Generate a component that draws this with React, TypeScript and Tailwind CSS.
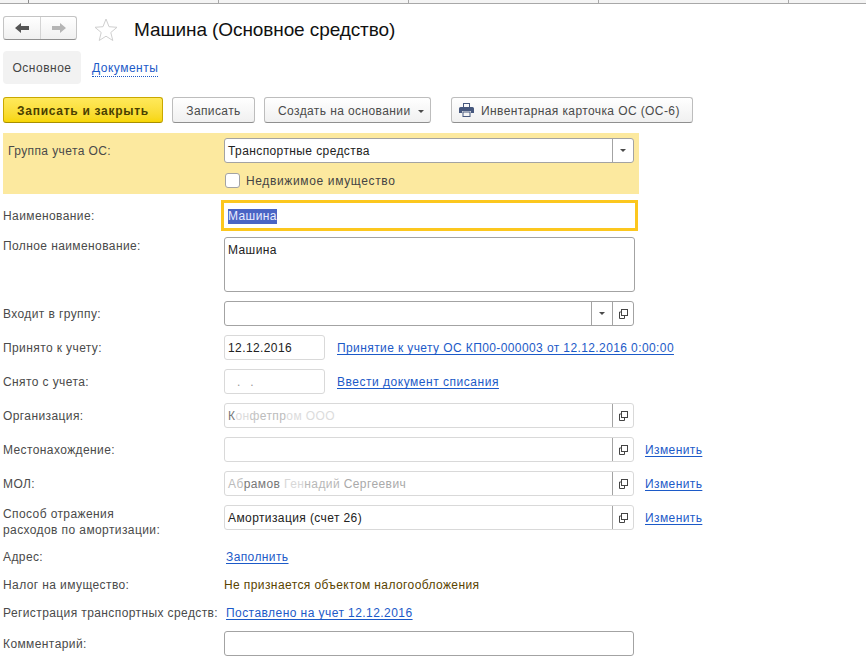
import React from "react";

const Caret = () => (
  <svg width="6" height="3" viewBox="0 0 6 3" className="shrink-0"><path d="M0 0h6L3 3z" fill="#4a4a4a" /></svg>
);

const OpenIcon = () => (
  <svg width="9" height="10" viewBox="0 0 9 10" fill="none" stroke="#444" strokeWidth="1" className="shrink-0">
    <rect x="2.5" y="0.5" width="6" height="6" />
    <path d="M2 3H0.5V9.500H5.500V7" />
  </svg>
);

const FieldButton = ({ kind, border }: { kind: "caret" | "open"; border: string }) => (
  <div className={`w-[21px] self-stretch flex items-center justify-center border-l ${border}`}>
    {kind === "caret" ? <Caret /> : <OpenIcon />}
  </div>
);

const Field = ({
  w,
  dark,
  children,
  buttons = [],
}: {
  w: string;
  dark?: boolean;
  children?: React.ReactNode;
  buttons?: ("caret" | "open")[];
}) => (
  <div className={`${w} h-[25px] flex items-center bg-white rounded-[3px] border ${dark ? "border-[#a3a3a3]" : "border-[#d9d9d9]"} shrink-0`}>
    <div className="flex-1 pl-[3px] pt-[2px] text-[#222] whitespace-nowrap overflow-hidden">{children}</div>
    {buttons.map((b, i) => (
      <FieldButton key={i} kind={b} border="border-[#a3a3a3]" />
    ))}
  </div>
);

const A = ({ children, className = "" }: { children: React.ReactNode; className?: string }) => (
  <a className={`pt-[2px] text-[#1c5ac8] underline underline-offset-2 whitespace-nowrap ${className}`}>{children}</a>
);

const Row = ({
  label,
  children,
  className = "h-[25px] mt-[9px]",
}: {
  label: React.ReactNode;
  children: React.ReactNode;
  className?: string;
}) => (
  <div className={`flex items-center ${className}`}>
    <div className="w-[221px] shrink-0 pt-[2px] text-[#4a4a4a] whitespace-nowrap">{label}</div>
    {children}
  </div>
);

const Btn = ({ children, className = "" }: { children: React.ReactNode; className?: string }) => (
  <button className={`h-[26px] pt-[2px] flex items-center justify-center rounded-[3px] border border-[#bdbdbd] border-b-[#8f8f8f] bg-gradient-to-b from-white to-[#f0f0f0] text-[#4a4a4a] ${className}`}>
    {children}
  </button>
);

export default function App() {
  return (
    <div className="w-[866px] h-[666px] overflow-hidden bg-white text-[12px] leading-[15px] tracking-[0.4px] [font-family:'Liberation_Sans',Arial,sans-serif]">
      <div className="flex h-[4px] bg-[#f4f4f4] border-b border-[#a8a8a8]">
        <div className="w-[29px] border-r border-[#8a8a8a]" />
        <div className="w-[190px] border-r border-[#a8a8a8]" />
        <div className="w-[190px] border-r border-[#a8a8a8]" />
        <div className="w-[190px] border-r border-[#a8a8a8]" />
        <div className="w-[190px] border-r border-[#a8a8a8]" />
      </div>

      <div className="flex items-center h-[24px] mt-[12px] pl-[3px]">
        <div className="flex w-[74px] h-[24px] rounded-[3px] border border-[#c4c4c4] border-b-[#8f8f8f] bg-gradient-to-b from-white to-[#f0f0f0]">
          <div className="w-[37px] flex items-center justify-center border-r border-[#d4d4d4]">
            <svg width="14" height="10" viewBox="0 0 14 10"><path d="M0 5L6 0V3H14V7H6V10z" fill="#555" /></svg>
          </div>
          <div className="flex-1 flex items-center justify-center">
            <svg width="14" height="10" viewBox="0 0 14 10"><path d="M14 5L8 0V3H0V7H8V10z" fill="#b5b5b5" /></svg>
          </div>
        </div>
        <svg width="24" height="23" viewBox="0 0 24 23" className="ml-[17px] mt-[3px]" fill="#fff" stroke="#cfcfcf" strokeWidth="1">
          <path d="M12 1l3 7.700 8 .6-6.200 5.200 2 8-6.800-4.300-6.800 4.300 2-8L1 9.300l8-.6z" />
        </svg>
        <h1 className="ml-[16px] pt-[4px] text-[19px] leading-[24px] tracking-[-0.1px] text-[#111]">Машина (Основное средство)</h1>
      </div>

      <div className="flex items-center h-[33px] mt-[11px] pl-[3px]">
        <div className="w-[78px] h-[33px] pt-[2px] flex items-center justify-center rounded-[4px] bg-[#f2f2f2] text-[#444] tracking-[0.5px]">Основное</div>
        <a className="ml-[11px] mt-[2px] text-[#1c5ac8] border-b border-dotted border-[#1c5ac8] tracking-[0.5px]">Документы</a>
      </div>

      <div className="flex items-center h-[26px] mt-[13px] pl-[3px]">
        <Btn className="w-[160px] !border-[#c9a800] !border-b-[#a88f00] !from-[#ffe95a] !to-[#f7d600] !text-[#4a3f00] font-bold tracking-[0.72px]">Записать и закрыть</Btn>
        <Btn className="w-[83px] ml-[9px]">Записать</Btn>
        <Btn className="w-[167px] ml-[9px] !justify-start pl-[13px] gap-[7px]">Создать на основании <Caret /></Btn>
        <Btn className="w-[242px] ml-[20px] !justify-start pl-[7px] gap-[7px]">
          <svg width="15" height="14" viewBox="0 0 15 14" fill="#47587e" className="-mt-[2px]">
            <path d="M4 0h7v4H4z M5 1v3h5V1z" fillRule="evenodd" />
            <path d="M1.500 4h12A1.500 1.500 0 0 1 15 5.500V10h-3V8H3v2H0V5.500A1.500 1.500 0 0 1 1.500 4z" />
            <path d="M3.500 8.500h8V14h-8z M4.500 9.500V13h6V9.500z" fillRule="evenodd" />
          </svg>
          Инвентарная карточка ОС (ОС-6)
        </Btn>
      </div>

      <div className="w-[636px] h-[61px] mt-[10px] ml-[3px] bg-[#fce99f] pt-[5px]">
        <div className="flex items-center h-[25px]">
          <div className="w-[221px] pl-[5px] pt-[2px] text-[#4a4a4a]">Группа учета ОС:</div>
          <Field w="w-[410px]" dark buttons={["caret"]}>Транспортные средства</Field>
        </div>
        <div className="flex items-center h-[15px] mt-[10px] ml-[222px]">
          <span className="w-[15px] h-[15px] rounded-[3px] border border-[#a3a3a3] bg-white" />
          <span className="ml-[6px] pt-[2px] text-[#444] tracking-[0.64px]">Недвижимое имущество</span>
        </div>
      </div>

      <div className="pl-[3px]">
        <Row label="Наименование:" className="h-[31px] mt-[6px]">
          <div className="w-[417px] h-[31px] -ml-[3px] flex items-center border-[3px] border-[#fcc71e] pl-[4px]">
            <span className="bg-[#4a64c4] text-[#e8ecff] mt-[1px]">Машина</span>
          </div>
        </Row>

        <div className="flex h-[55px] mt-[6px]">
          <div className="w-[221px] pt-[2px] text-[#4a4a4a]">Полное наименование:</div>
          <div className="w-[411px] rounded-[3px] border border-[#a3a3a3] pl-[3px] pt-[5px] text-[#222]">Машина</div>
        </div>

        <Row label="Входит в группу:">
          <Field w="w-[410px]" dark buttons={["caret", "open"]} />
        </Row>

        <Row label="Принято к учету:">
          <Field w="w-[101px]">12.12.2016</Field>
          <A className="ml-[12px]">Принятие к учету ОС КП00-000003 от 12.12.2016 0:00:00</A>
        </Row>

        <Row label="Снято с учета:">
          <Field w="w-[101px]"><span className="text-[#999] pl-[9px] tracking-[10px]">..</span></Field>
          <A className="ml-[12px] tracking-[0.52px]">Ввести документ списания</A>
        </Row>

        <Row label="Организация:">
          <Field w="w-[410px]" buttons={["open"]}>
            <span className="text-[#777]">К</span>
            <span className="text-[#dcdcdc]">он</span>
            <span className="text-[#c4c4c4]">ф</span>
            <span className="text-[#bcbcbc]">етпр</span>
            <span className="text-[#dcdcdc]">ом ООО</span>
          </Field>
          <span />
        </Row>

        <Row label="Местонахождение:">
          <Field w="w-[410px]" buttons={["open"]} />
          <A className="ml-[11px]">Изменить</A>
        </Row>

        <Row label="МОЛ:">
          <Field w="w-[410px]" buttons={["open"]}>
            <span className="text-[#bbb]">Аб</span>
            <span className="text-[#777]">рамов </span>
            <span className="text-[#d8d8d8]">Ген</span>
            <span className="text-[#b8b8b8]">надий</span>
            <span className="text-[#aaa]"> Сергеевич</span>
          </Field>
          <A className="ml-[11px]">Изменить</A>
        </Row>

        <Row
          label={
            <span className="block leading-[16px] mt-[6px]">
              Способ отражения
              <br />
              расходов по амортизации:
            </span>
          }
        >
          <Field w="w-[410px]" buttons={["open"]}>Амортизация (счет 26)</Field>
          <A className="ml-[11px]">Изменить</A>
        </Row>

        <Row label="Адрес:" className="h-[15px] mt-[19px]">
          <A className="ml-[2px]">Заполнить</A>
        </Row>

        <Row label="Налог на имущество:" className="h-[15px] mt-[13px]">
          <span className="pt-[2px] text-[#5a4300] whitespace-nowrap">Не признается объектом налогообложения</span>
        </Row>

        <Row label="Регистрация транспортных средств:" className="h-[15px] mt-[13px]">
          <A className="ml-[2px] tracking-[0.44px]">Поставлено на учет 12.12.2016</A>
        </Row>

        <Row label="Комментарий:" className="h-[25px] mt-[11px]">
          <Field w="w-[410px]" dark />
        </Row>
      </div>
    </div>
  );
}
